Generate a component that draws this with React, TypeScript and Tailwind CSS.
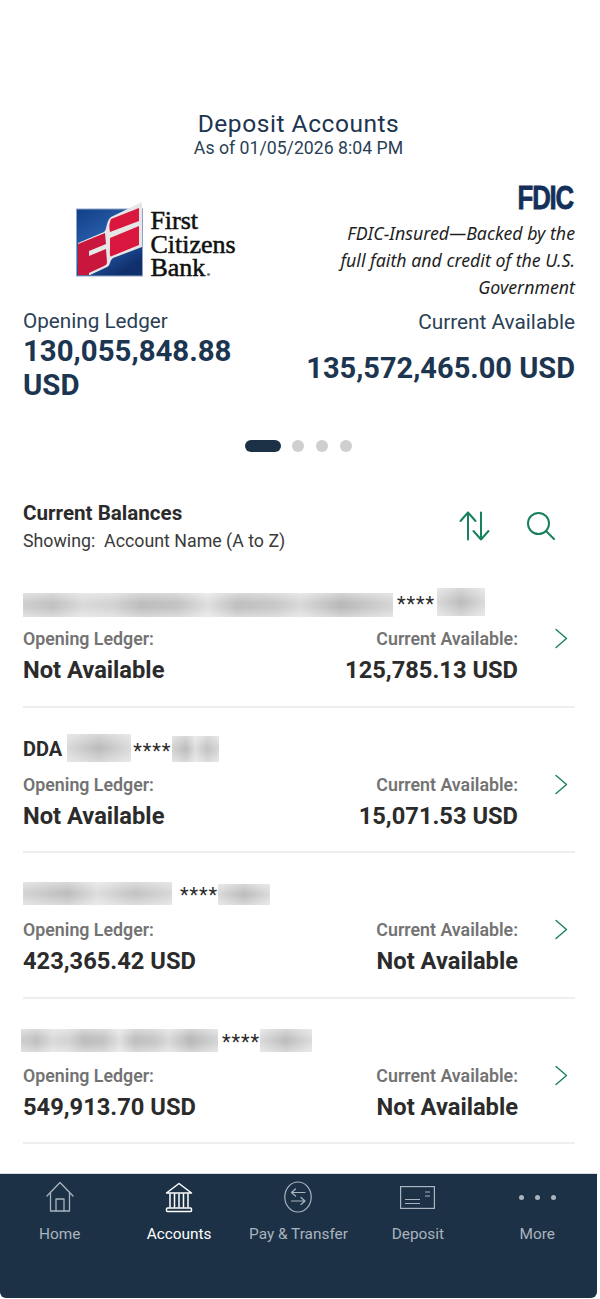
import React from "react";

const green = "#17805c";

function Chevron() {
  return (
    <svg width="14" height="21" viewBox="0 0 14 21" fill="none" stroke={green} strokeWidth="1.4" strokeLinecap="round" strokeLinejoin="round">
      <path d="M2 1.5 L12.5 10.5 L2 19.5" />
    </svg>
  );
}

function Logo() {
  return (
    <div className="flex items-start gap-[7px]">
      <svg width="67" height="75" viewBox="0 0 67 75">
        <defs>
          <linearGradient id="blueg" x1="0" y1="0" x2="0.6" y2="1">
            <stop offset="0" stopColor="#123f86" />
            <stop offset="0.55" stopColor="#2a62b0" />
            <stop offset="1" stopColor="#0f2f6d" />
          </linearGradient>
        </defs>
        <rect x="0.5" y="7" width="66" height="67" fill="url(#blueg)" stroke="#8ea3c6" strokeWidth="1" />
        <path d="M2 41 L28 30 C31 28 30 19 35 15 L66 0 L66 45 L37 56 C33 59 35 63 31 65 L14 73 L2 73 Z" fill="#e6e6e6" />
        <path d="M35 17 L63 6 L63 19 L34 30 C33 26 33 21 35 17 Z" fill="#d9173f" />
        <path d="M34 36 L63 24 L63 43 L36 54 C33 56 34 50 34 46 Z" fill="#d9173f" />
        <path d="M2 42 L29 31 L30 42 L13 49 L13 54 L30 47 L31 60 C31 62 30 63 28 64 L13 71 L13 73 L2 73 Z" fill="#c9163c" />
      </svg>
      <div className="font-['Liberation_Serif',serif] text-[26px] leading-[23.5px] text-[#111111] [-webkit-text-stroke:0.55px_#111111] mt-[7px]">
        <div>First</div>
        <div>Citizens</div>
        <div>
          Bank<span className="text-[#777] [-webkit-text-stroke:0px]">.</span>
        </div>
      </div>
    </div>
  );
}

function Smudge({ w, h, mt = 0, bg }: { w: number; h: number; mt?: number; bg: string }) {
  return <div className={`shrink-0 overflow-hidden ${bg}`} style={{ width: w, height: h, marginTop: mt }} />;
}

function Stars({ className }: { className: string }) {
  return <span className={`text-[20px] leading-none text-[#2b2b2b] tracking-[0.9px] ${className}`}>****</span>;
}

function Row({ name, left, right }: { name: React.ReactNode; left: string; right: string }) {
  return (
    <div className="h-[145.5px] border-b-2 border-[#eeeeee] pt-[26px] flex flex-col">
      <div className="h-[29px] flex items-start">{name}</div>
      <div className="flex justify-between mt-[10px]">
        <div>
          <div className="text-[17.8px] leading-[24px] font-semibold text-[#737373]">Opening Ledger:</div>
          <div className="text-[23.7px] leading-[34px] font-bold text-[#2b2b2b] mt-[2px]">{left}</div>
        </div>
        <div className="flex">
          <div className="text-right">
            <div className="text-[17.8px] leading-[24px] font-semibold text-[#737373]">Current Available:</div>
            <div className="text-[23.7px] leading-[34px] font-bold text-[#2b2b2b] mt-[2px]">{right}</div>
          </div>
          <div className="w-[57px] flex justify-end pr-[7px] pt-[1px]">
            <Chevron />
          </div>
        </div>
      </div>
    </div>
  );
}

const iconGray = "#a9b4bf";

function NavItem({ icon, label, active }: { icon: React.ReactNode; label: string; active?: boolean }) {
  return (
    <div className="flex flex-col items-center">
      <div className="h-[32px] flex items-center justify-center">{icon}</div>
      <div className={`mt-[11px] text-[15.4px] leading-[20px] ${active ? "text-white" : "text-[#aab4be]"}`}>{label}</div>
    </div>
  );
}

const smA =
  "bg-[linear-gradient(180deg,rgba(255,255,255,.4),rgba(255,255,255,0)_40%,rgba(255,255,255,0)_60%,rgba(255,255,255,.4)),linear-gradient(90deg,#cfcfcf,#c2c2c2_8%,#dadada_16%,#d4d4d4_24%,#bebebe_32%,#c4c4c4_42%,#e0e0e0_50%,#c0c0c0_58%,#c8c8c8_68%,#dadada_75%,#b9b9b9_86%,#d6d6d6_100%)]";
const smB =
  "bg-[linear-gradient(180deg,rgba(255,255,255,.4),rgba(255,255,255,0)_45%,rgba(255,255,255,0)_55%,rgba(255,255,255,.4)),linear-gradient(90deg,#dadada,#bdbdbd_50%,#dcdcdc)]";
const smC =
  "bg-[linear-gradient(180deg,rgba(255,255,255,.4),rgba(255,255,255,0)_45%,rgba(255,255,255,0)_55%,rgba(255,255,255,.4)),linear-gradient(90deg,#d4d4d4,#bebebe_30%,#dedede_50%,#c4c4c4_75%,#d8d8d8)]";

export default function App() {
  return (
    <div className="w-[597px] h-[1299px] bg-white font-['Roboto',sans-serif] flex flex-col">
      <div className="pt-[109px] text-center text-[#1c3550]">
        <div className="text-[24.5px] leading-[30px] tracking-[0.55px]">Deposit Accounts</div>
        <div className="text-[17.7px] leading-[20px] text-[#2a3f55] -mt-[1px]">As of 01/05/2026 8:04 PM</div>
      </div>

      <div className="flex justify-between pl-[23px] pr-[22px] pt-[20px] h-[287px]">
        <div className="w-[266px]">
          <div className="flex justify-center pt-[24px] h-[131px]">
            <Logo />
          </div>
          <div className="text-[20.7px] leading-[24px] text-[#2a3f55]">Opening Ledger</div>
          <div className="text-[29.4px] leading-[34px] font-bold text-[#1c3550] mt-[1px]">130,055,848.88 USD</div>
        </div>
        <div className="flex flex-col items-end">
          <div className="h-[29px] mt-[7px] mr-[2px] text-[33px] leading-[26px] font-bold text-[#14305a] [-webkit-text-stroke:0.8px_#14305a] font-['Liberation_Sans',sans-serif] tracking-[-1.5px] scale-x-[0.78] origin-right">
            FDIC
          </div>
          <div className="text-right italic font-['Noto_Sans',sans-serif] text-[17.75px] leading-[27px] text-[#1f1f1f] mt-[6px]">
            <div>FDIC-Insured—Backed by the</div>
            <div>full faith and credit of the U.S.</div>
            <div>Government</div>
          </div>
          <div className="text-[20.8px] leading-[24px] text-[#2a3f55] mt-[8.5px]">Current Available</div>
          <div className="text-[29px] leading-[34px] font-bold text-[#1c3550] mt-[17px]">135,572,465.00 USD</div>
        </div>
      </div>

      <div className="flex justify-center items-center gap-[12px] h-[12px] -mt-[5px]">
        <div className="w-[36px] h-[12px] rounded-full bg-[#1c3145] -mr-[1px]" />
        <div className="w-[12px] h-[12px] rounded-full bg-[#cfcfcf]" />
        <div className="w-[12px] h-[12px] rounded-full bg-[#cfcfcf]" />
        <div className="w-[12px] h-[12px] rounded-full bg-[#cfcfcf]" />
      </div>

      <div className="flex justify-between pl-[23px] pr-[42px] mt-[47px] h-[58px]">
        <div>
          <div className="text-[20.6px] leading-[28px] font-bold text-[#2b2b2b]">Current Balances</div>
          <div className="text-[17.8px] leading-[26px] text-[#3a3a3a] whitespace-pre mt-[1px]">Showing:  Account Name (A to Z)</div>
        </div>
        <div className="flex gap-[37px] pt-[12px]">
          <svg width="31" height="30" viewBox="0 0 31 30" fill="none" stroke={green} strokeWidth="2" strokeLinecap="round" strokeLinejoin="round">
            <path d="M9 28.5 V1.5 M1.5 10 L9 1.5 L16.5 10" />
            <path d="M22 1.5 V28.5 M14.5 20 L22 28.5 L29.5 20" />
          </svg>
          <svg width="28" height="28" viewBox="0 0 28 28" fill="none" stroke={green} strokeWidth="2" strokeLinecap="round" className="mt-[1px]">
            <circle cx="11.5" cy="11.5" r="10.5" />
            <path d="M19 19 L27 27" />
          </svg>
        </div>
      </div>

      <div className="pl-[23px] pr-[22px] mt-[5px]">
        <Row
          name={
            <>
              <Smudge w={370} h={24} mt={5} bg={smA} />
              <Stars className="ml-[4px] mr-[2px] mt-[6px]" />
              <Smudge w={48} h={28} bg={smB} />
            </>
          }
          left="Not Available"
          right="125,785.13 USD"
        />
        <Row
          name={
            <>
              <span className="text-[20px] leading-[29px] font-bold text-[#2b2b2b] mt-[1px]">DDA</span>
              <div className="w-[5px]" />
              <Smudge w={64} h={28} bg={smB} />
              <Stars className="ml-[2px] mr-[1px] mt-[7px]" />
              <Smudge w={47} h={26} mt={2} bg={smC} />
            </>
          }
          left="Not Available"
          right="15,071.53 USD"
        />
        <Row
          name={
            <>
              <Smudge w={149} h={23} mt={3} bg={smC} />
              <Stars className="ml-[8px] mt-[6px]" />
              <Smudge w={52} h={21} mt={5} bg={smB} />
            </>
          }
          left="423,365.42 USD"
          right="Not Available"
        />
        <Row
          name={
            <div className="-ml-[2px] flex">
              <Smudge w={197} h={23} mt={4} bg={smA} />
              <Stars className="ml-[4px] mt-[7px]" />
              <Smudge w={52} h={23} mt={4} bg={smB} />
            </div>
          }
          left="549,913.70 USD"
          right="Not Available"
        />
      </div>

      <div className="mt-[29px] h-[125px] bg-[#1c3145] rounded-b-[6px] grid grid-cols-5 pt-[7px] border-t border-[#d8dde2]">
        <NavItem
          label="Home"
          icon={
            <svg width="28" height="32" viewBox="0 0 28 32" fill="none" stroke={iconGray} strokeWidth="1.3" strokeLinejoin="round" strokeLinecap="round">
              <path d="M1 15 L14 1.5 L27 15" />
              <path d="M4.5 12 V30 H23.5 V12" />
              <path d="M10 30 V18 H18 V30" />
            </svg>
          }
        />
        <NavItem
          active
          label="Accounts"
          icon={
            <svg width="28" height="31" viewBox="0 0 28 31" fill="none" stroke="#ffffff" strokeWidth="1.5" strokeLinejoin="round" strokeLinecap="round">
              <path d="M1.5 11 L14 1.5 L26.5 11 Z" />
              <path d="M5 12 V25 M9.5 12 V25 M14 12 V25 M18.5 12 V25 M23 12 V25" />
              <rect x="1.5" y="26" width="25" height="3.5" rx="1" />
            </svg>
          }
        />
        <NavItem
          label="Pay & Transfer"
          icon={
            <svg width="28" height="32" viewBox="0 0 28 32" fill="none" stroke={iconGray} strokeWidth="1.2" strokeLinejoin="round" strokeLinecap="round">
              <ellipse cx="14" cy="16" rx="13.2" ry="15" />
              <path d="M21 11.5 H8 M11.5 8 L7.5 11.5 L11.5 15" />
              <path d="M7.5 20 H20.5 M17 16.5 L21 20 L17 23.5" />
            </svg>
          }
        />
        <NavItem
          label="Deposit"
          icon={
            <svg width="35" height="23" viewBox="0 0 35 23" fill="none" stroke={iconGray} strokeWidth="1.2">
              <rect x="0.6" y="0.6" width="33.8" height="21.8" />
              <path d="M5 13.5 H20 M5 17.5 H20 M25 6 H30 M25 10 H30" />
            </svg>
          }
        />
        <NavItem
          label="More"
          icon={
            <div className="flex gap-[11px]">
              <div className="w-[5px] h-[5px] rounded-full bg-[#aab4be]" />
              <div className="w-[5px] h-[5px] rounded-full bg-[#aab4be]" />
              <div className="w-[5px] h-[5px] rounded-full bg-[#aab4be]" />
            </div>
          }
        />
      </div>
    </div>
  );
}
